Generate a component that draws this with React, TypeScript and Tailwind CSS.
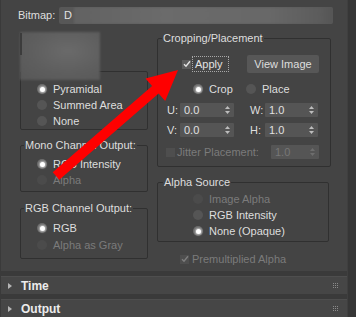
import React from "react";

function Radio({ on, disabled, label }: { on?: boolean; disabled?: boolean; label: string }) {
  return (
    <div className="flex h-[16px] items-center">
      <span
        className={`flex h-[10px] w-[10px] shrink-0 items-center justify-center rounded-full ${
          disabled ? "bg-[#4b4b4b]" : on ? "bg-[#6a6a6a]" : "bg-[#555555]"
        }`}
      >
        {on && <span className="h-[5px] w-[5px] rounded-full bg-white shadow-[0_0_2px_1px_rgba(255,255,255,0.55)]" />}
      </span>
      <span className={`ml-[6px] whitespace-nowrap ${disabled ? "text-[#7b7b7b]" : "text-[#dedede]"}`}>{label}</span>
    </div>
  );
}

function Check({ checked, disabled }: { checked?: boolean; disabled?: boolean }) {
  return (
    <span
      className={`flex h-[9px] w-[9px] shrink-0 items-center justify-center ${
        disabled ? "bg-[#4e4e4e]" : "bg-[#5c5c5c]"
      }`}
    >
      {checked && (
        <svg width="8" height="8" viewBox="0 0 8 8">
          <path
            d="M1 4.2 L3 6.2 L7 1.2"
            fill="none"
            stroke={disabled ? "#7e7e7e" : "#e4e4e4"}
            strokeWidth="1.4"
          />
        </svg>
      )}
    </span>
  );
}

function Arrows({ disabled }: { disabled?: boolean }) {
  const c = disabled ? "#6e6e6e" : "#bdbdbd";
  return (
    <svg width="5" height="8" viewBox="0 0 5 8" className="shrink-0">
      <path d="M2.5 0 L5 3 L0 3 Z" fill={c} />
      <path d="M0 5 L5 5 L2.5 8 Z" fill={c} />
    </svg>
  );
}

function Spin({ value, w, disabled }: { value: string; w: string; disabled?: boolean }) {
  return (
    <div className={`flex h-[14px] ${w} items-center rounded-[1px] bg-[#555555] pl-[4px] pr-[4px]`}>
      <span className={`flex-1 ${disabled ? "text-[#777777]" : "text-[#e0e0e0]"}`}>{value}</span>
      <Arrows disabled={disabled} />
    </div>
  );
}

function Group({
  title,
  className,
  legendClass,
  children,
}: {
  title: string;
  className?: string;
  legendClass?: string;
  children: React.ReactNode;
}) {
  return (
    <fieldset className={`rounded-[2px] border border-[#303030] ${className ?? ""}`}>
      <legend className={`px-[1px] leading-[13px] text-[#dedede] ${legendClass ?? "ml-[3px]"}`}>{title}</legend>
      {children}
    </fieldset>
  );
}

function Grip() {
  return (
    <svg width="6" height="6" viewBox="0 0 6 6">
      {[0, 2, 4].map((y) =>
        [0, 2, 4].map((x) => <rect key={`${x}-${y}`} x={x} y={y} width="1" height="1" fill="#8a8a8a" />)
      )}
    </svg>
  );
}

function Rollout({ title, className }: { title: string; className?: string }) {
  return (
    <div className={`flex h-[18px] items-center border-t border-[#4e4e4e] bg-[#464646] ${className ?? ""}`}>
      <svg width="4" height="6" viewBox="0 0 4 6" className="ml-[7px]">
        <path d="M0 0 L4 3 L0 6 Z" fill="#b5b5b5" />
      </svg>
      <span className="ml-[9px] flex-1 text-[12px] font-bold text-[#ececec]">{title}</span>
      <span className="mr-[8px]">
        <Grip />
      </span>
    </div>
  );
}

export default function App() {
  return (
    <div className="relative flex h-[317px] w-[356px] overflow-hidden bg-[#3a3a3a] font-['Liberation_Sans',Arial,sans-serif] text-[11px]">
      <div className="flex w-[347px] flex-col">
        <div className="ml-[1px] h-[274px] bg-[#444444]">
          {/* Bitmap row */}
          <div className="flex pt-[7px]">
            <span className="w-[58px] pl-[17px] leading-[17px] text-[#dedede]">Bitmap:</span>
            <div className="flex h-[17px] w-[274px] items-center overflow-hidden rounded-[2px] bg-[#575757]">
              <span className="pl-[5px] text-[#e2e2e2]">D</span>
              <div className="ml-[2px] h-[17px] flex-1 bg-[linear-gradient(90deg,#626262,#6b6b6b_35%,#686868_75%,#5c5c5c_95%,#555555)] blur-[1px]" />
            </div>
          </div>

          <div className="flex">
            {/* Left column */}
            <div className="ml-[19px] mt-[41px] flex w-[128px] flex-col">
              <Group title="Filtering:" className="pb-0">
                <div className="flex flex-col pl-[16px] pt-[3px]">
                  <Radio on label="Pyramidal" />
                  <Radio label="Summed Area" />
                  <Radio label="None" />
                </div>
              </Group>
              <Group title="Mono Channel Output:" className="mt-[9px]">
                <div className="flex flex-col pb-[3px] pl-[16px] pt-[4px]">
                  <Radio on label="RGB Intensity" />
                  <Radio disabled label="Alpha" />
                </div>
              </Group>
              <Group title="RGB Channel Output:" className="mt-[10px]">
                <div className="flex flex-col gap-[1px] pb-[5px] pl-[16px] pt-[5px]">
                  <Radio on label="RGB" />
                  <Radio disabled label="Alpha as Gray" />
                </div>
              </Group>
            </div>

            {/* Right column */}
            <div className="ml-[9px] mt-[8px] flex w-[174px] flex-col">
              <Group title="Cropping/Placement" legendClass="ml-[4px]">
                <div className="flex flex-col pb-[7px]">
                  <div className="mt-[10px] flex h-[18px] items-center pl-[24px]">
                    <Check checked />
                    <span className="ml-[1px] flex h-[16px] items-center border border-dotted border-[#a8a8a8] pl-[2px] pr-[5px] text-[#e2e2e2]">
                      Apply
                    </span>
                    <button className="ml-auto mr-[11px] flex h-[18px] w-[72px] items-center justify-center rounded-[2px] bg-[#575757] text-[#dedede]">
                      View Image
                    </button>
                  </div>
                  <div className="mt-[8px] flex h-[16px] items-center pl-[35px]">
                    <div className="w-[53px]">
                      <Radio on label="Crop" />
                    </div>
                    <Radio label="Place" />
                  </div>
                  <div className="mt-[6px] flex h-[14px] items-center pl-[9px]">
                    <span className="w-[13px] text-[#dedede]">U:</span>
                    <Spin value="0.0" w="w-[54px]" />
                    <span className="ml-[16px] w-[15px] text-[#dedede]">W:</span>
                    <Spin value="1.0" w="w-[53px]" />
                  </div>
                  <div className="mt-[6px] flex h-[14px] items-center pl-[9px]">
                    <span className="w-[13px] text-[#dedede]">V:</span>
                    <Spin value="0.0" w="w-[54px]" />
                    <span className="ml-[16px] w-[15px] text-[#dedede]">H:</span>
                    <Spin value="1.0" w="w-[53px]" />
                  </div>
                  <div className="mt-[8px] flex h-[14px] items-center pl-[8px]">
                    <Check disabled />
                    <span className="ml-[2px] text-[#7b7b7b]">Jitter Placement:</span>
                    <div className="ml-auto mr-[11px]">
                      <Spin value="1.0" w="w-[48px]" disabled />
                    </div>
                  </div>
                </div>
              </Group>

              <Group title="Alpha Source" className="mt-[9px] w-[172px]" legendClass="ml-[5px]">
                <div className="flex flex-col pb-[2px] pl-[35px] pt-[2px]">
                  <Radio disabled label="Image Alpha" />
                  <Radio label="RGB Intensity" />
                  <Radio on label="None (Opaque)" />
                </div>
              </Group>

              <div className="mt-[10px] flex h-[14px] items-center pl-[23px]">
                <Check checked disabled />
                <span className="ml-[3px] text-[#7b7b7b]">Premultiplied Alpha</span>
              </div>
            </div>
          </div>
        </div>

        <Rollout title="Time" className="ml-[1px] mt-[5px]" />
        <Rollout title="Output" className="ml-[1px] mt-[5px]" />
      </div>
      <div className="w-[9px] border-l border-[#3f3f3f] bg-[#363636]" />

      {/* redacted area */}
      <div className="absolute left-[20px] top-[32px] h-[48px] w-[80px] bg-[radial-gradient(ellipse_at_60%_40%,#6a6a6a,#5e5e5e_55%,#575757)] blur-[1px]" />
      <div className="absolute left-[20px] top-[33px] h-[22px] w-[2px] bg-[#3c3c3c] blur-[0.5px]" />

      {/* red arrow annotation */}
      <svg className="pointer-events-none absolute left-0 top-0" width="356" height="317" viewBox="0 0 356 317">
        <polygon
          points="178,70 165.2,101 158.6,93.5 59.3,179.8 52.7,172.2 152.1,85.9 145.5,78.4"
          fill="#ff0000"
        />
      </svg>
    </div>
  );
}
